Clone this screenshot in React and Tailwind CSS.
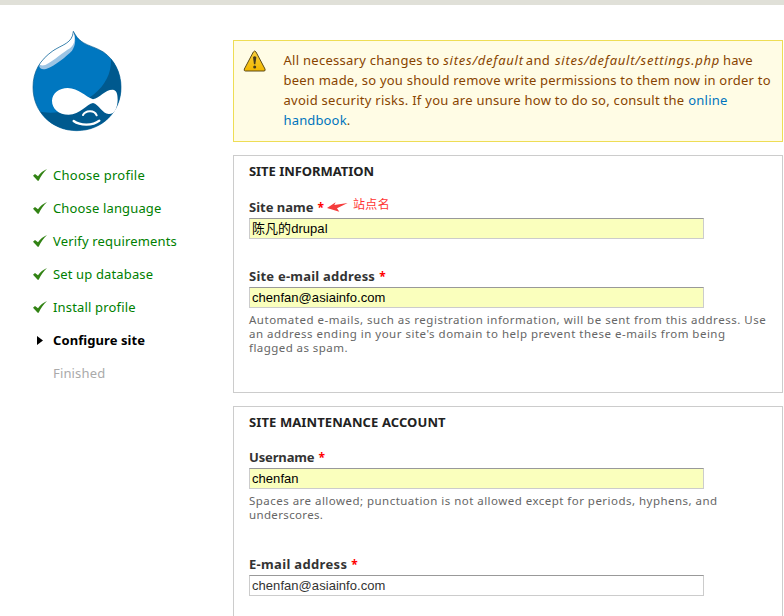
const sans = "font-['Noto_Sans','Noto_Sans_CJK_SC',sans-serif]";

function Logo() {
  return (
    <svg className="block h-[102px] w-[90px]" viewBox="36 30 270 306">
      <defs>
        <clipPath id="drop">
          <path d="M160 34C168 48 174 58 190 68C206 78 228 82 250 96C284 120 303 158 303 202C303 276 246 332 170 332C96 332 39 276 39 202C39 154 60 120 98 93C126 74 158 70 160 34Z" />
        </clipPath>
      </defs>
      <g clipPath="url(#drop)">
        <rect x="30" y="30" width="280" height="310" fill="#0077c0" />
        <path d="M272 100C278 150 262 190 220 224C150 275 110 285 52 274L60 340H310V100Z" fill="#00598e" />
        <path d="M160 34C168 56 168 76 156 92C140 108 108 136 78 147C58 152 54 138 60 124C82 92 146 92 160 34Z" fill="#9cc4e4" />
        <path d="M160 34C166 54 166 72 150 85C130 96 105 120 76 135C60 140 54 132 58 118C80 80 144 80 160 34Z" fill="#fff" />
      </g>
      <path d="M160 34C168 48 174 58 190 68C206 78 228 82 250 96C284 120 303 158 303 202C303 276 246 332 170 332C96 332 39 276 39 202C39 154 60 120 98 93C126 74 158 70 160 34Z" fill="none" stroke="#00598e" strokeWidth="2" />
      <path d="M143 204C176 204 196 230 219 238C240 234 254 209 278 209C290 210 293 222 293 240C292 264 284 283 266 282C248 282 236 252 219 249C200 252 180 284 146 284C116 284 96 266 96 242C97 219 118 204 143 204Z" fill="#fff" />
      <path d="M189 285C196 272 222 268 230 286" fill="none" stroke="#fff" strokeWidth="6" strokeLinecap="round" />
      <path d="M161 303C180 317 218 318 238 302" fill="none" stroke="#fff" strokeWidth="7" strokeLinecap="round" />
    </svg>
  );
}

function Check() {
  return (
    <svg className="-mt-px h-3 w-[14px]" viewBox="0 0 42 36">
      <path d="M0 20L6 15L15 22C22 12 30 5 42 0C32 10 24 20 17 35H14Z" fill="#328314" />
    </svg>
  );
}

const done = [
  ["Choose profile", "tracking-[0.26px]"],
  ["Choose language", "tracking-[0.15px]"],
  ["Verify requirements", "tracking-[0.17px]"],
  ["Set up database", "tracking-[0.14px]"],
  ["Install profile", "tracking-[0.17px]"],
];

function Sidebar() {
  return (
    <aside className="w-[233px] shrink-0 pt-[25px] pl-8">
      <Logo />
      <ul className="mt-[27px] text-[13px]">
        {done.map(([name, tracking]) => (
          <li key={name} className="flex h-[33px] items-center whitespace-nowrap text-[#008000]">
            <span className="w-[21px] pl-px">
              <Check />
            </span>
            <span className={tracking}>{name}</span>
          </li>
        ))}
        <li className="flex h-[33px] items-center font-bold whitespace-nowrap text-black">
          <span className="w-[21px] pl-[5px]">
            <svg className="h-[9px] w-[6px]" viewBox="0 0 6 9">
              <path d="M0 0L6 4.5L0 9Z" />
            </svg>
          </span>
          <span className="tracking-[0.08px]">Configure site</span>
        </li>
        <li className="flex h-[33px] items-center pl-[21px] text-[#aaa]">
          <span className="tracking-[0.15px]">Finished</span>
        </li>
      </ul>
    </aside>
  );
}

function Warning() {
  return (
    <div className="flex h-[102px] border border-[#eedd55] bg-[#fffce5] pt-[9px] text-[13px] leading-5 whitespace-nowrap text-[#884400]">
      <svg className="ml-[9px] h-[22px] w-[23px]" viewBox="0 0 69 66">
        <defs>
          <linearGradient id="amber" x1="0" y1="0" x2="0" y2="1">
            <stop offset="0" stopColor="#f8cf3d" />
            <stop offset="1" stopColor="#f2b700" />
          </linearGradient>
        </defs>
        <path d="M31 6Q35 0 39 6L66 57Q68 63 63 63H7Q2 63 4 57Z" fill="url(#amber)" stroke="#5d4b18" strokeWidth="3" />
        <path d="M30 22Q35 15 40 22L37 43H33Z" fill="#463b1d" />
        <circle cx="35" cy="51" r="4.5" fill="#463b1d" />
      </svg>
      <div className="ml-[17.5px]">
        <p className="tracking-[0.27px]">
          All necessary changes to <em className="tracking-[0.76px]">sites/default</em>
          <span className="ml-[2px] mr-[5px]">and</span>
          <em className="tracking-[0.73px]">sites/default/settings.php</em>
          <span className="ml-[3px] tracking-[0.1px]">have</span>
        </p>
        <p className="tracking-[0.23px]">been made, so you should remove write permissions to them now in order to</p>
        <p className="tracking-[0.27px]">
          avoid security risks. If you are unsure how to do so, consult the <a className="text-[#0074bd]">online</a>
        </p>
        <p className="tracking-[0.15px]">
          <a className="text-[#0074bd]">handbook</a>.
        </p>
      </div>
    </div>
  );
}

function Field({ label, tracking, value, filled = true, note }) {
  return (
    <div>
      <div className="flex h-5 items-center pt-[2px] text-[13px] font-bold whitespace-nowrap text-[#333]">
        <label className={tracking}>{label}</label>
        <span className="ml-[4px] text-[12px] leading-4 text-[#ff0000]">*</span>
        {note}
      </div>
      <div
        className={`mt-px flex h-[21px] w-[455px] items-center border border-[#ccc] border-t-[#999] pl-[2px] font-['Liberation_Sans','Noto_Sans_CJK_SC',sans-serif] text-[13px] tracking-[0.05px] ${filled ? "bg-[#faffbd] text-black" : "bg-white text-[#333]"}`}
      >
        {value}
      </div>
    </div>
  );
}

function Note() {
  return (
    <span className="-mt-[8px] ml-[3px] flex items-center font-['Noto_Sans_CJK_SC',sans-serif] text-[12px] leading-4 font-normal text-[#ff3333]">
      <svg className="mt-[5px] mr-[5px] h-[10px] w-[21px]" viewBox="0 0 63 30">
        <path d="M0 18L26 1L22 9L62 3L30 19L37 29Z" fill="#f53c3c" />
      </svg>
      <span className="tracking-[0.3px]">站点名</span>
    </span>
  );
}

const legend = "h-5 text-[13px] leading-5 font-bold whitespace-nowrap text-[#222]";
const description = "mt-[5px] text-[11.5px] leading-[14px] whitespace-nowrap text-[#666]";

export default function App() {
  return (
    <div className={`h-[616px] w-[784px] overflow-hidden bg-white ${sans}`}>
      <div className="h-[5px] bg-[#e0e0d8]" />
      <div className="flex">
        <Sidebar />
        <main className="w-[550px] pt-[35px]">
          <Warning />
          <section className="mt-[13px] h-[238px] border border-[#ccc] pt-[5px] pl-[15px]">
            <h2 className={legend}><span className="tracking-[-0.05px]">SITE INFORMATION</span></h2>
            <div className="mt-4">
              <Field label="Site name" tracking="tracking-[0px]" value="陈凡的drupal" note={<Note />} />
            </div>
            <div className="mt-[27px]">
              <Field label="Site e-mail address" tracking="tracking-[0.22px]" value="chenfan@asiainfo.com" />
            </div>
            <div className={description}>
              <p className="tracking-[0.51px]">Automated e-mails, such as registration information, will be sent from this address. Use</p>
              <p className="tracking-[0.49px]">an address ending in your site's domain to help prevent these e-mails from being</p>
              <p className="tracking-[0.44px]">flagged as spam.</p>
            </div>
          </section>
          <section className="mt-[13px] h-[238px] border border-[#ccc] pt-[5px] pl-[15px]">
            <h2 className={legend}><span className="tracking-[0.1px]">SITE MAINTENANCE ACCOUNT</span></h2>
            <div className="mt-[15px]">
              <Field label="Username" tracking="tracking-[-0.15px]" value="chenfan" />
            </div>
            <div className={description}>
              <p className="tracking-[0.47px]">Spaces are allowed; punctuation is not allowed except for periods, hyphens, and</p>
              <p className="tracking-[0.35px]">underscores.</p>
            </div>
            <div className="mt-8">
              <Field label="E-mail address" tracking="tracking-[0.33px]" value="chenfan@asiainfo.com" filled={false} />
            </div>
          </section>
        </main>
      </div>
    </div>
  );
}
